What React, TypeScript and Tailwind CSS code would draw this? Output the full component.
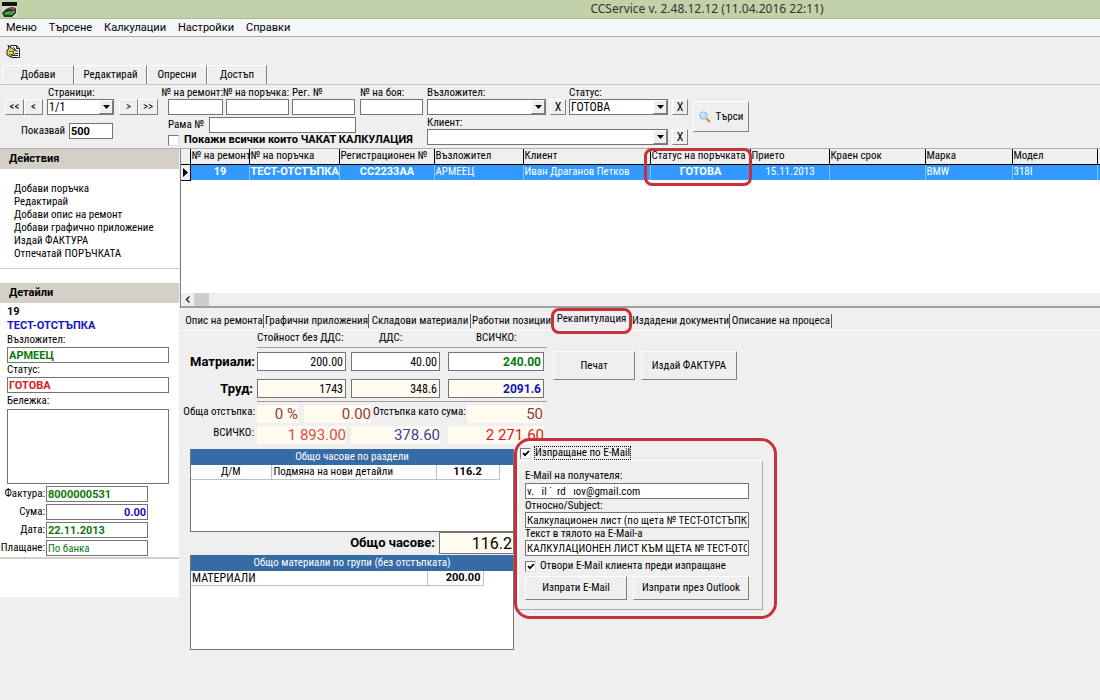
import { useState } from "react";
import type { ReactNode } from "react";
import clsx from "clsx";

type FieldProps = {
  id: string;
  label: string;
  className?: string;
};

type ComboProps = FieldProps & {
  options: string[];
};

const bold = "font-[Roboto,sans-serif] text-[11px] font-bold";

const menu = ["Меню", "Търсене", "Калкулации", "Настройки", "Справки"];

const actions = [
  "Добави поръчка",
  "Редактирай",
  "Добави опис на ремонт",
  "Добави графично приложение",
  "Издай ФАКТУРА",
  "Отпечатай ПОРЪЧКАТА",
];

const columns = [
  { name: "№ на ремонт", value: "19", width: "w-[59px]", cell: clsx(bold, "text-center") },
  { name: "№ на поръчка", value: "ТЕСТ-ОТСТЪПКА", width: "w-[90px]", cell: bold },
  { name: "Регистрационен №", value: "CC2233AA", width: "w-[95px]", cell: clsx(bold, "text-center") },
  { name: "Възложител", value: "АРМЕЕЦ", width: "w-[89px]", cell: "" },
  { name: "Клиент", value: "Иван Драганов Петков", width: "w-[127px]", cell: "" },
  { name: "Статус на поръчката", value: "ГОТОВА", width: "w-[100px]", cell: clsx(bold, "text-center") },
  { name: "Прието", value: "15.11.2013", width: "w-[79px]", cell: "text-center" },
  { name: "Краен срок", value: "", width: "w-[96px]", cell: "" },
  { name: "Марка", value: "BMW", width: "w-[87px]", cell: "" },
  { name: "Модел", value: "318I", width: "w-[85px]", cell: "" },
];

const tabs = [
  { name: "Опис на ремонта", width: "w-[80px]" },
  { name: "Графични приложения", width: "w-[105px]" },
  { name: "Складови материали", width: "w-[102px]" },
  { name: "Работни позиции", width: "w-[81px]" },
  { name: "Рекапитулация", width: "w-[79px]" },
  { name: "Издадени документи", width: "w-[99px]" },
  { name: "Описание на процеса", width: "w-[102px]" },
];

const inputBase = "block h-4 w-full min-w-0 rounded-none border border-[#747474] bg-white px-px outline-none";
const raised = "border border-t-white border-l-white border-r-[#808080] border-b-[#808080] bg-[#efefef] text-center";

function WinButton({ children, className, label }: { children: ReactNode; className?: string; label?: string }) {
  return (
    <button type="button" aria-label={label} className={clsx(raised, "shrink-0 whitespace-nowrap", className)}>
      {children}
    </button>
  );
}

function Field({ id, label, className }: FieldProps) {
  return (
    <div className={clsx("flex shrink-0 flex-col", className)}>
      <label htmlFor={id} className="block h-3 leading-3 whitespace-nowrap">{label}</label>
      <input id={id} className={inputBase} />
    </div>
  );
}

function Select({ id, options, label }: { id: string; options: string[]; label?: string }) {
  return (
    <div className="relative">
      <select id={id} aria-label={label} className={clsx(inputBase, "appearance-none pr-4 text-[12px] leading-3")}>
        {options.map((option) => (
          <option key={option}>{option}</option>
        ))}
      </select>
      <span className="pointer-events-none absolute top-px right-px flex h-[14px] w-[14px] items-center justify-center border border-t-white border-l-white border-r-[#808080] border-b-[#808080] bg-[#efefef]">
        <svg width="7" height="4" viewBox="0 0 7 4"><path d="M0 0h7L3.500 4z" fill="#000" /></svg>
      </span>
    </div>
  );
}

function Combo({ id, label, options, className }: ComboProps) {
  return (
    <div className={clsx("shrink-0", className)}>
      <label htmlFor={id} className="block h-3 leading-3">{label}</label>
      <Select id={id} options={options} />
    </div>
  );
}

function Checkbox({ id, defaultChecked = false }: { id: string; defaultChecked?: boolean }) {
  const [checked, setChecked] = useState(defaultChecked);
  return (
    <span className="relative block h-[11px] w-[11px] shrink-0">
      <input
        id={id}
        type="checkbox"
        checked={checked}
        onChange={(e) => setChecked(e.target.checked)}
        className="block h-[11px] w-[11px] appearance-none border border-t-[#777] border-l-[#777] border-r-[#ddd] border-b-[#ddd] bg-white"
      />
      {checked && (
        <svg className="pointer-events-none absolute top-[2px] left-[2px]" width="8" height="7" viewBox="0 0 8 7">
          <path d="M1 3l2 2.200L7 1" fill="none" stroke="#000" strokeWidth="1.800" />
        </svg>
      )}
    </span>
  );
}

function AppIcon() {
  return (
    <svg width="15" height="15" viewBox="0 0 15 15">
      <path d="M0 0h15v15H0z" fill="#d8dccf" />
      <path d="M0 0h15v4H0z" fill="#10131c" />
      <path d="M0 11l4-4 5-2 5 1v5l-4 4H2z" fill="#26332a" />
      <path d="M2 12l3-2 5-1 3 0-3 4H3z" fill="#2f9a3c" />
      <path d="M4 8l6-3 4 1-2 2-4-1z" fill="#b9403c" />
      <path d="M3 11l5-1M9 12l4-3" stroke="#6fc976" />
    </svg>
  );
}

function ToolIcon() {
  return (
    <svg width="15" height="15" viewBox="0 0 15 15">
      <path d="M4.500 1.500h6l3 3v9h-8z" fill="#fff" stroke="#222" />
      <path d="M10.500 1.500v3h3M9 7h3M9 9.500h3M9 11.500h3" stroke="#222" fill="none" />
      <path d="M1 6l2-1-1-4 3 3 4 2-2 2 2 4-3-1-1 2-4-2z" fill="#e6dc62" stroke="#26261a" />
      <path d="M3 8l2-1 2 1M3 10.500h4M7 3l3 3" stroke="#5c5820" fill="none" />
    </svg>
  );
}

function SearchIcon() {
  return (
    <svg width="12" height="12" viewBox="0 0 12 12">
      <path d="M7.500 7.500l3.500 3.500" stroke="#c08a4a" strokeWidth="2" />
      <circle cx="4.500" cy="4.500" r="3.700" fill="#bfe0f8" stroke="#8bb8dc" />
      <path d="M2.500 4.500a2 2 0 0 1 2-2" stroke="#fff" fill="none" />
    </svg>
  );
}

function Filters() {
  return (
    <section className="flex items-start border-t border-b border-t-[#c4c4c4] border-b-[#b0b0b0] pt-[2px] pb-px">
      <div className="w-[168px] shrink-0 pl-[5px]">
        <label htmlFor="page" className="ml-[43px] block h-3 leading-3">Страници:</label>
        <div className="flex items-center">
          <WinButton className="h-4 w-[19px] leading-3" label="Първа страница">&lt;&lt;</WinButton>
          <WinButton className="h-4 w-[19px] leading-3" label="Предишна страница">&lt;</WinButton>
          <div className="ml-1 w-[67px]"><Select id="page" options={["1/1"]} /></div>
          <WinButton className="ml-[5px] h-4 w-[19px] leading-3" label="Следваща страница">&gt;</WinButton>
          <WinButton className="h-4 w-5 leading-3" label="Последна страница">&gt;&gt;</WinButton>
        </div>
        <div className="mt-2 ml-4 flex items-center">
          <label htmlFor="show" className="w-12">Показвай</label>
          <input id="show" defaultValue="500" className={clsx(bold, "h-4 w-11 border border-[#747474] bg-white px-px")} />
        </div>
      </div>

      <div className="w-[259px] shrink-0">
        <div className="flex">
          <Field id="f-repair" label="№ на ремонт:" className="w-[55px] items-end" />
          <Field id="f-order" label="№ на поръчка:" className="ml-[3px] w-[63px] items-end" />
          <Field id="f-reg" label="Рег. №" className="ml-[3px] w-[63px]" />
          <Field id="f-paint" label="№ на боя:" className="ml-[5px] w-[63px]" />
        </div>
        <div className="mt-[2px] flex items-center">
          <label htmlFor="f-frame" className="w-[41px] shrink-0 whitespace-nowrap">Рама №</label>
          <div className="w-[147px]"><input id="f-frame" className={inputBase} /></div>
        </div>
        <div className="flex h-[14px] items-center gap-[5px]">
          <Checkbox id="f-waiting" />
          <label htmlFor="f-waiting" className={clsx(bold, "whitespace-nowrap")}>Покажи всички които ЧАКАТ КАЛКУЛАЦИЯ</label>
        </div>
      </div>

      <div className="w-[262px] shrink-0">
        <div className="flex items-end">
          <Combo id="f-assignor" label="Възложител:" options={[""]} className="w-[119px]" />
          <WinButton className="ml-1 h-4 w-4 text-[12px] leading-3" label="Изчисти възложител">X</WinButton>
          <Combo id="f-status" label="Статус:" options={["ГОТОВА"]} className="ml-[3px] w-[99px]" />
          <WinButton className="ml-1 h-4 w-4 text-[12px] leading-3" label="Изчисти статус">X</WinButton>
        </div>
        <div className="mt-[2px] flex items-end">
          <Combo id="f-client" label="Клиент:" options={[""]} className="w-[241px]" />
          <WinButton className="ml-1 h-4 w-4 text-[12px] leading-3" label="Изчисти клиент">X</WinButton>
        </div>
      </div>

      <WinButton className="mt-[14px] ml-1 h-[31px] w-14">
        <span className="flex items-center justify-center gap-[5px]"><SearchIcon />Търси</span>
      </WinButton>
    </section>
  );
}

function SideHeading({ children }: { children: ReactNode }) {
  return <h2 className={clsx(bold, "h-5 bg-[#d4d0c8] pl-[9px] leading-5")}>{children}</h2>;
}

function Sidebar() {
  const rows = [
    { id: "d-invoice", label: "Фактура:", value: "8000000531", style: clsx(bold, "text-[#0a7a0a]") },
    { id: "d-sum", label: "Сума:", value: "0.00", style: clsx(bold, "text-right text-[#1414b8]") },
    { id: "d-date", label: "Дата:", value: "22.11.2013", style: clsx(bold, "text-[#0a7a0a]") },
    { id: "d-pay", label: "Плащане:", value: "По банка", style: "text-[#0a7a0a]" },
  ];

  return (
    <aside className="w-[179px] shrink-0 self-start bg-white pb-[38px]">
      <SideHeading>Действия</SideHeading>
      <ul className="border-b border-[#d4d0c8] pt-[13px] pb-2 pl-[14px]">
        {actions.map((action) => (
          <li key={action} className="h-[13px] leading-[13px] whitespace-nowrap">
            <a href="#">{action}</a>
          </li>
        ))}
      </ul>
      <div className="mt-[14px]">
        <SideHeading>Детайли</SideHeading>
      </div>
      <div className="border-b-2 border-[#d4d0c8] pt-[2px]">
        <div className="pr-[10px] pl-[7px]">
          <p className={clsx(bold, "h-[14px]")}>19</p>
          <p className={clsx(bold, "h-[14px] text-[#1414c8]")}>ТЕСТ-ОТСТЪПКА</p>
          <label htmlFor="d-assignor" className="block h-[14px]">Възложител:</label>
          <input id="d-assignor" defaultValue="АРМЕЕЦ" className={clsx(inputBase, bold, "text-[#0a7a0a]")} />
          <label htmlFor="d-status" className="block h-[14px]">Статус:</label>
          <input id="d-status" defaultValue="ГОТОВА" className={clsx(inputBase, bold, "text-[#e01818]")} />
          <label htmlFor="d-note" className="block h-4 leading-4">Бележка:</label>
          <textarea id="d-note" className="block h-[75px] w-full resize-none border border-[#747474] bg-white" />
        </div>
        <div className="mt-[2px] flex flex-col gap-[2px] pb-px">
          {rows.map((row) => (
            <div key={row.id} className="flex items-center">
              <label htmlFor={row.id} className="flex w-[46px] shrink-0 justify-end pr-px whitespace-nowrap">{row.label}</label>
              <div className="w-[102px]">
                <input id={row.id} defaultValue={row.value} className={clsx(inputBase, row.style)} />
              </div>
            </div>
          ))}
        </div>
      </div>
    </aside>
  );
}

function Orders() {
  return (
    <section className="flex h-[159px] flex-col border-b-2 border-l border-b-[#a0a0a0] border-l-[#808080] bg-white">
      <table className="w-full table-fixed border-collapse">
        <thead>
          <tr className="h-[15px] bg-[#efefef]">
            <th className="w-[9px] border-r border-b border-black" />
            {columns.map((column) => (
              <th key={column.name} className={clsx("relative border-r border-b border-black p-0 pl-px text-left leading-3 font-normal whitespace-nowrap", column.width)}>
                {column.name}
                {column.name === "Статус на поръчката" && (
                  <span className="pointer-events-none absolute -top-px -left-[7px] z-10 block h-[38px] w-[108px] rounded-lg border-3 border-[#c8303a]" />
                )}
              </th>
            ))}
            <th className="border-b border-black" />
          </tr>
        </thead>
        <tbody>
          <tr className="h-4 bg-[#3399ff] text-white">
            <td className="border-r border-b border-black bg-[#efefef] p-0">
              <svg className="mx-auto" width="5" height="9" viewBox="0 0 5 9"><path d="M0 0l5 4.500L0 9z" fill="#000" /></svg>
            </td>
            {columns.map((column) => (
              <td key={column.name} className={clsx("border-r border-[#8cc0f0] p-0 pl-px leading-[14px] whitespace-nowrap", column.cell)}>
                {column.value}
              </td>
            ))}
            <td />
          </tr>
        </tbody>
      </table>
      <div className="mt-auto flex h-[13px] bg-[#efefef]">
        <button type="button" aria-label="Наляво" className="flex w-[13px] items-center justify-center">
          <svg width="5" height="7" viewBox="0 0 5 7"><path d="M4.500 .5l-3 3 3 3" fill="none" stroke="#333" strokeWidth="1.500" /></svg>
        </button>
        <span className="w-[15px] bg-[#cdcdcd]" />
      </div>
    </section>
  );
}

function Tabs() {
  return (
    <nav className="flex h-[23px] items-end border-b border-[#f8f8f8] pl-1">
      {tabs.map((tab) => {
        const active = tab.name === "Рекапитулация";
        return (
          <button
            key={tab.name}
            type="button"
            className={clsx(
              "relative flex shrink-0 justify-center leading-[14px] whitespace-nowrap",
              active ? "h-[18px]" : "h-4",
              tab.width,
            )}
          >
            {tab.name}
            {active ? (
              <span className="pointer-events-none absolute -inset-x-px -top-1 h-[26px] rounded-lg border-3 border-[#c8303a]" />
            ) : (
              tab.name !== "Работни позиции" && <span className="absolute top-0 right-0 h-[14px] w-px bg-[#606060]" />
            )}
          </button>
        );
      })}
    </nav>
  );
}

function Summary() {
  const box = "h-[19px] shrink-0 border border-[#747474] pr-[2px] text-right text-[12px] outline-none";
  const flat = "h-[18px] shrink-0 bg-[#fffbf0] text-right font-[Roboto,sans-serif] text-[15px] leading-[18px]";
  const title = "w-[77px] shrink-0 text-right font-[Roboto,sans-serif] text-[13px] font-bold";

  return (
    <section className="w-[367px] shrink-0">
      <div className="flex h-4 pl-[77px]">
        <span className="w-[94px] whitespace-nowrap">Стойност без ДДС:</span>
        <span className="w-[88px] pl-7">ДДС:</span>
        <span className="w-24 pl-[37px]">ВСИЧКО:</span>
      </div>
      <div className="ml-[77px] h-px bg-[#a0a0a0]" />
      <div className="mt-1 flex items-center">
        <label htmlFor="s-mat" className={clsx(title, "pr-[2px]")}>Матриали:</label>
        <input id="s-mat" defaultValue="200.00" className={clsx(box, "w-[89px] bg-white")} />
        <input aria-label="Матриали ДДС" defaultValue="40.00" className={clsx(box, "ml-[5px] w-[89px] bg-white")} />
        <input aria-label="Матриали всичко" defaultValue="240.00" className={clsx(box, "ml-2 w-24 bg-white font-[Roboto,sans-serif] font-bold text-[#0a7a0a]")} />
      </div>
      <div className="mt-2 flex items-center">
        <label htmlFor="s-work" className={clsx(title, "pr-1")}>Труд:</label>
        <input id="s-work" defaultValue="1743" className={clsx(box, "w-[89px] bg-[#fffbf0]")} />
        <input aria-label="Труд ДДС" defaultValue="348.6" className={clsx(box, "ml-[5px] w-[89px] bg-[#fffbf0]")} />
        <input aria-label="Труд всичко" defaultValue="2091.6" className={clsx(box, "ml-2 w-24 bg-[#fffbf0] font-[Roboto,sans-serif] font-bold text-[#1414b8]")} />
      </div>
      <div className="mt-[3px] ml-[77px] h-px bg-[#a0a0a0]" />
      <div className="mt-[3px] flex">
        <span className="flex w-[77px] shrink-0 justify-end pr-[2px] whitespace-nowrap">Обща отстъпка:</span>
        <output className={clsx(flat, "w-[41px] text-[#903c3c]")}>0 %</output>
        <output className={clsx(flat, "ml-[6px] w-[67px] text-[#903c3c]")}>0.00</output>
        <span className="w-24 shrink-0 pl-[2px] whitespace-nowrap">Отстъпка като сума:</span>
        <output className={clsx(flat, "w-[76px] text-[#903c3c]")}>50</output>
      </div>
      <div className="mt-[3px] flex">
        <span className="w-[77px] shrink-0 pr-[3px] text-right">ВСИЧКО:</span>
        <output className={clsx(flat, "w-[89px] text-[#e04848]")}>1 893.00</output>
        <output className={clsx(flat, "ml-[5px] w-[89px] text-[#40409a]")}>378.60</output>
        <output className={clsx(flat, "ml-2 w-24 text-[#e01818]")}>2 271.60</output>
      </div>
    </section>
  );
}

function Totals() {
  const cell = "border-r border-b border-[#c0c0c0] p-0 leading-[14px]";
  const caption = "h-4 bg-[#366ba5] text-center leading-4 text-white";

  return (
    <section className="w-[334px] shrink-0 pl-[10px]">
      <div className="h-[83px] border border-t-0 border-[#747474] bg-white">
        <h3 className={caption}>Общо часове по раздели</h3>
        <table className="w-[308px] table-fixed border-collapse">
          <tbody>
            <tr>
              <td className={clsx(cell, "w-20 text-center")}>Д/М</td>
              <td className={clsx(cell, "w-[165px] pl-[2px]")}>Подмяна на нови детайли</td>
              <td className={clsx(cell, bold, "w-[63px] text-center")}>116.2</td>
            </tr>
          </tbody>
        </table>
      </div>
      <div className="flex h-[22px] items-center justify-end">
        <label htmlFor="t-hours" className="pr-1 font-[Roboto,sans-serif] text-[13px] font-bold">Общо часове:</label>
        <input id="t-hours" defaultValue="116.2" className="h-[22px] w-[75px] border border-[#747474] bg-[#fffbf0] pr-px text-right font-[Roboto,sans-serif] text-[16px]" />
      </div>
      <div className="mt-px h-[95px] border border-t-0 border-[#747474] bg-white">
        <h3 className={caption}>Общо материали по групи (без отстъпката)</h3>
        <table className="w-[292px] table-fixed border-collapse">
          <tbody>
            <tr>
              <td className={clsx(cell, "w-[236px] pl-px text-[12px]")}>МАТЕРИАЛИ</td>
              <td className={clsx(cell, bold, "w-14 pr-[2px] text-right")}>200.00</td>
            </tr>
          </tbody>
        </table>
      </div>
    </section>
  );
}

function EmailForm() {
  return (
    <section className="relative -mt-[3px] w-[263px] shrink-0">
      <div className="flex h-[14px] items-center gap-[3px] pl-[6px]">
        <Checkbox id="m-send" defaultChecked />
        <label htmlFor="m-send" className="border border-dotted border-black leading-3">Изпращане по E-Mail</label>
      </div>
      <div className="ml-1 w-[245px] border border-t-white border-l-white border-r-[#a8a8a8] border-b-[#a8a8a8] px-[6px] pt-2 pb-[9px]">
        <div className="w-[224px]">
          <label htmlFor="m-to" className="block h-[14px]">E-Mail на получателя:</label>
          <input id="m-to" defaultValue="v.   il ˙  rd   ıov@gmail.com" className={inputBase} />
          <label htmlFor="m-subject" className="block h-[13px] leading-[13px]">Относно/Subject:</label>
          <input id="m-subject" defaultValue="Калкулационен лист (по щета № ТЕСТ-ОТСТЪПКА)" className={inputBase} />
          <label htmlFor="m-body" className="block h-3 leading-3">Текст в тялото на E-Mail-a</label>
          <input id="m-body" defaultValue="КАЛКУЛАЦИОНЕН ЛИСТ КЪМ ЩЕТА № ТЕСТ-ОТСТЪПКА" className={inputBase} />
          <div className="flex h-5 items-center gap-1">
            <Checkbox id="m-open" defaultChecked />
            <label htmlFor="m-open" className="whitespace-nowrap">Отвори E-Mail клиента преди изпращане</label>
          </div>
          <div className="flex gap-[6px]">
            <WinButton className="h-6 w-[102px]">Изпрати E-Mail</WinButton>
            <WinButton className="h-6 w-[116px]">Изпрати през Outlook</WinButton>
          </div>
        </div>
      </div>
      <span className="pointer-events-none absolute -top-2 left-0 h-[181px] w-full rounded-2xl border-3 border-[#c8303a]" />
    </section>
  );
}

export default function App() {
  return (
    <div className="min-h-screen overflow-hidden bg-[#efefef] font-['Roboto_Condensed',Roboto,sans-serif] text-[11px] leading-[14px] text-black">
      <header>
        <div className="flex h-[19px] items-center border-b border-[#aab596] bg-[#c3d1a8] pl-[2px]">
          <AppIcon />
          <h1 className="flex-1 pl-[297px] text-center font-['Noto_Sans',sans-serif] text-[12px] text-[#333]">CCService v. 2.48.12.12 (11.04.2016 22:11)</h1>
        </div>
        <nav className="flex h-[18px] items-center gap-3 border-b border-[#a8acb0] bg-[#f5f6f7] pl-[6px] font-[Roboto,sans-serif]">
          {menu.map((item) => (
            <a key={item} href="#">{item}</a>
          ))}
        </nav>
      </header>

      <div className="flex h-7 items-center pl-[6px]">
        <button type="button" aria-label="Нов документ"><ToolIcon /></button>
      </div>
      <div className="flex h-[19px] pl-[2px]">
        <WinButton className="w-[72px] border-b-0">Добави</WinButton>
        <WinButton className="w-[73px] border-b-0">Редактирай</WinButton>
        <WinButton className="w-[60px] border-b-0">Опресни</WinButton>
        <WinButton className="w-[60px] border-b-0">Достъп</WinButton>
      </div>

      <Filters />

      <main className="flex items-start">
        <Sidebar />
        <div className="min-w-0 flex-1 pl-px">
          <Orders />
          <Tabs />
          <div className="flex items-start">
            <Summary />
            <div className="mt-5 ml-[6px] flex gap-[6px]">
              <WinButton className="h-[29px] w-[82px]">Печат</WinButton>
              <WinButton className="h-[29px] w-24">Издай ФАКТУРА</WinButton>
            </div>
          </div>
          <div className="mt-[5px] flex items-start">
            <Totals />
            <EmailForm />
          </div>
        </div>
      </main>
    </div>
  );
}
